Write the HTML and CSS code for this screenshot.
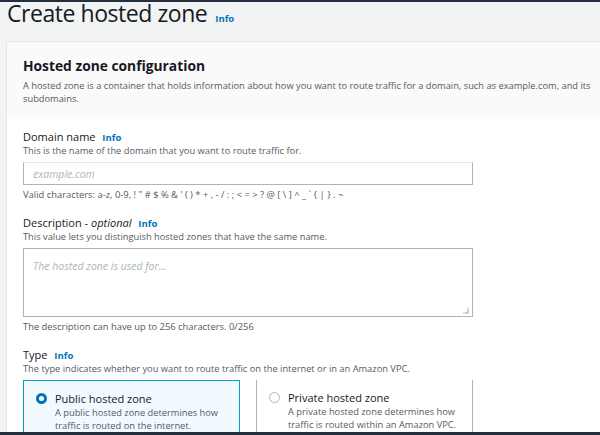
FILE: index.html
```html
<!DOCTYPE html>
<html>
<head>
<meta charset="utf-8">
<link rel="stylesheet" href="styles.css">
</head>
<body>
<div class="topbar"></div>
<div class="page-header">
  <h1 class="page-title">Create hosted zone</h1>
  <a class="info info-title">Info</a>
</div>
<div class="card">
  <div class="card-header">
    <h2 class="card-title">Hosted zone configuration</h2>
    <p class="card-desc">A hosted zone is a container that holds information about how you want to route traffic for a domain, such as example.com, and its subdomains.</p>
  </div>
  <div class="card-body">
    <div class="field">
      <div class="label">Domain name <a class="info">Info</a></div>
      <div class="hint">This is the name of the domain that you want to route traffic for.</div>
      <div class="input"><span class="placeholder">example.com</span></div>
      <div class="constraint">Valid characters: a-z, 0-9, ! " # $ % &amp; ' ( ) * + , - / : ; &lt; = &gt; ? @ [ \ ] ^ _ ` { | } . ~</div>
    </div>
    <div class="field">
      <div class="label">Description - <i>optional</i> <a class="info">Info</a></div>
      <div class="hint">This value lets you distinguish hosted zones that have the same name.</div>
      <div class="textarea"><span class="placeholder">The hosted zone is used for...</span>
        <svg class="grip" width="7" height="7" viewBox="0 0 7 7"><path d="M6 1v5H1M6 4v2H4" fill="none" stroke="#aab7b8" stroke-width="1"/></svg>
      </div>
      <div class="constraint">The description can have up to 256 characters. 0/256</div>
    </div>
    <div class="field">
      <div class="label">Type <a class="info">Info</a></div>
      <div class="hint">The type indicates whether you want to route traffic on the internet or in an Amazon VPC.</div>
      <div class="tiles">
        <div class="tile selected">
          <span class="radio on"></span>
          <div class="tile-text">
            <div class="tile-title">Public hosted zone</div>
            <div class="tile-desc">A public hosted zone determines how traffic is routed on the internet.</div>
          </div>
        </div>
        <div class="tile">
          <span class="radio"></span>
          <div class="tile-text">
            <div class="tile-title">Private hosted zone</div>
            <div class="tile-desc">A private hosted zone determines how traffic is routed within an Amazon VPC.</div>
          </div>
        </div>
      </div>
    </div>
  </div>
</div>
<div class="bottombar"></div>
</body>
</html>
```
FILE: styles.css
```css
html, body {
  margin: 0;
  padding: 0;
  height: 435px;
  overflow: hidden;
}
body {
  background: #f2f3f3;
  font-family: "Open Sans", "Noto Sans", sans-serif;
  color: #16191f;
}
.topbar {
  height: 2px;
  background: #232f3e;
}
.page-header {
  display: flex;
  align-items: baseline;
  padding: 0 0 0 7px;
  height: 40px;
}
.page-title {
  margin: 0;
  font-size: 23px;
  font-weight: 400;
  line-height: 23px;
  letter-spacing: -0.45px;
}
.info {
  color: #0073bb;
  font-weight: 700;
  font-size: 9.5px;
  margin-left: 6px;
}
.info-title {
  margin-left: 8px;
}
.card {
  margin-left: 7px;
  width: 620px;
  background: #fff;
  box-shadow: 0 0 1px rgba(0,28,36,0.3);
}
.card-header {
  background: #fafafa;
  padding: 13px 16px 12px 16px;
}
.card-title {
  margin: 0;
  font-size: 13.8px;
  font-weight: 700;
  line-height: 22px;
}
.card-desc {
  margin: 2px 0 0;
  font-size: 9.3px;
  line-height: 13px;
  color: #545b64;
  width: 575px;
}
.card-body {
  padding: 12px 16px 0 16px;
}
.field {
  width: 450px;
  margin-bottom: 14px;
}
.label {
  font-size: 11px;
  line-height: 15px;
}
.label .info {
  margin-left: 4px;
}
.hint {
  font-size: 9.3px;
  line-height: 12px;
  color: #545b64;
  margin-bottom: 5px;
}
.input {
  height: 23px;
  box-sizing: border-box;
  border: 1px solid #aab7b8;
  border-top-color: #e4e8e8;
  padding: 0 9px;
  display: flex;
  align-items: center;
}
.placeholder {
  font-style: italic;
  color: #aab7b8;
  font-size: 10.5px;
}
.constraint {
  font-size: 9.4px;
  line-height: 12px;
  color: #545b64;
  margin-top: 4px;
}
.textarea {
  position: relative;
  height: 69px;
  box-sizing: border-box;
  border: 1px solid #aab7b8;
  padding: 4px 9px;
  margin-bottom: 3px;
}
.grip {
  position: absolute;
  right: 3px;
  bottom: 2px;
}
.tiles {
  display: flex;
  gap: 16px;
  margin-top: 0;
}
.tile {
  flex: 1;
  display: flex;
  gap: 8px;
  padding: 10px 12px 10px 12px;
  border-left: 1px solid #aab7b8;
  border-right: 1px solid #aab7b8;
  height: 60px;
  box-sizing: border-box;
}
.tile.selected {
  background: #f1faff;
  border-left: 1px solid #00a1c9;
  border-right: 1px solid #00a1c9;
  border-top: 1px solid #00a1c9;
}
.radio {
  flex: none;
  width: 11px;
  height: 11px;
  box-sizing: border-box;
  border-radius: 50%;
  border: 1px solid #aab7b8;
  background: #fff;
  margin-top: 2px;
}
.radio.on {
  border: 3.5px solid #0073bb;
  background: #fff;
}
.tile-title {
  font-size: 11px;
  line-height: 15px;
}
.tile-desc {
  font-size: 9.3px;
  line-height: 13px;
  color: #545b64;
}
.bottombar {
  position: fixed;
  left: 0;
  right: 0;
  bottom: 0;
  height: 3px;
  background: #232f3e;
}
```
